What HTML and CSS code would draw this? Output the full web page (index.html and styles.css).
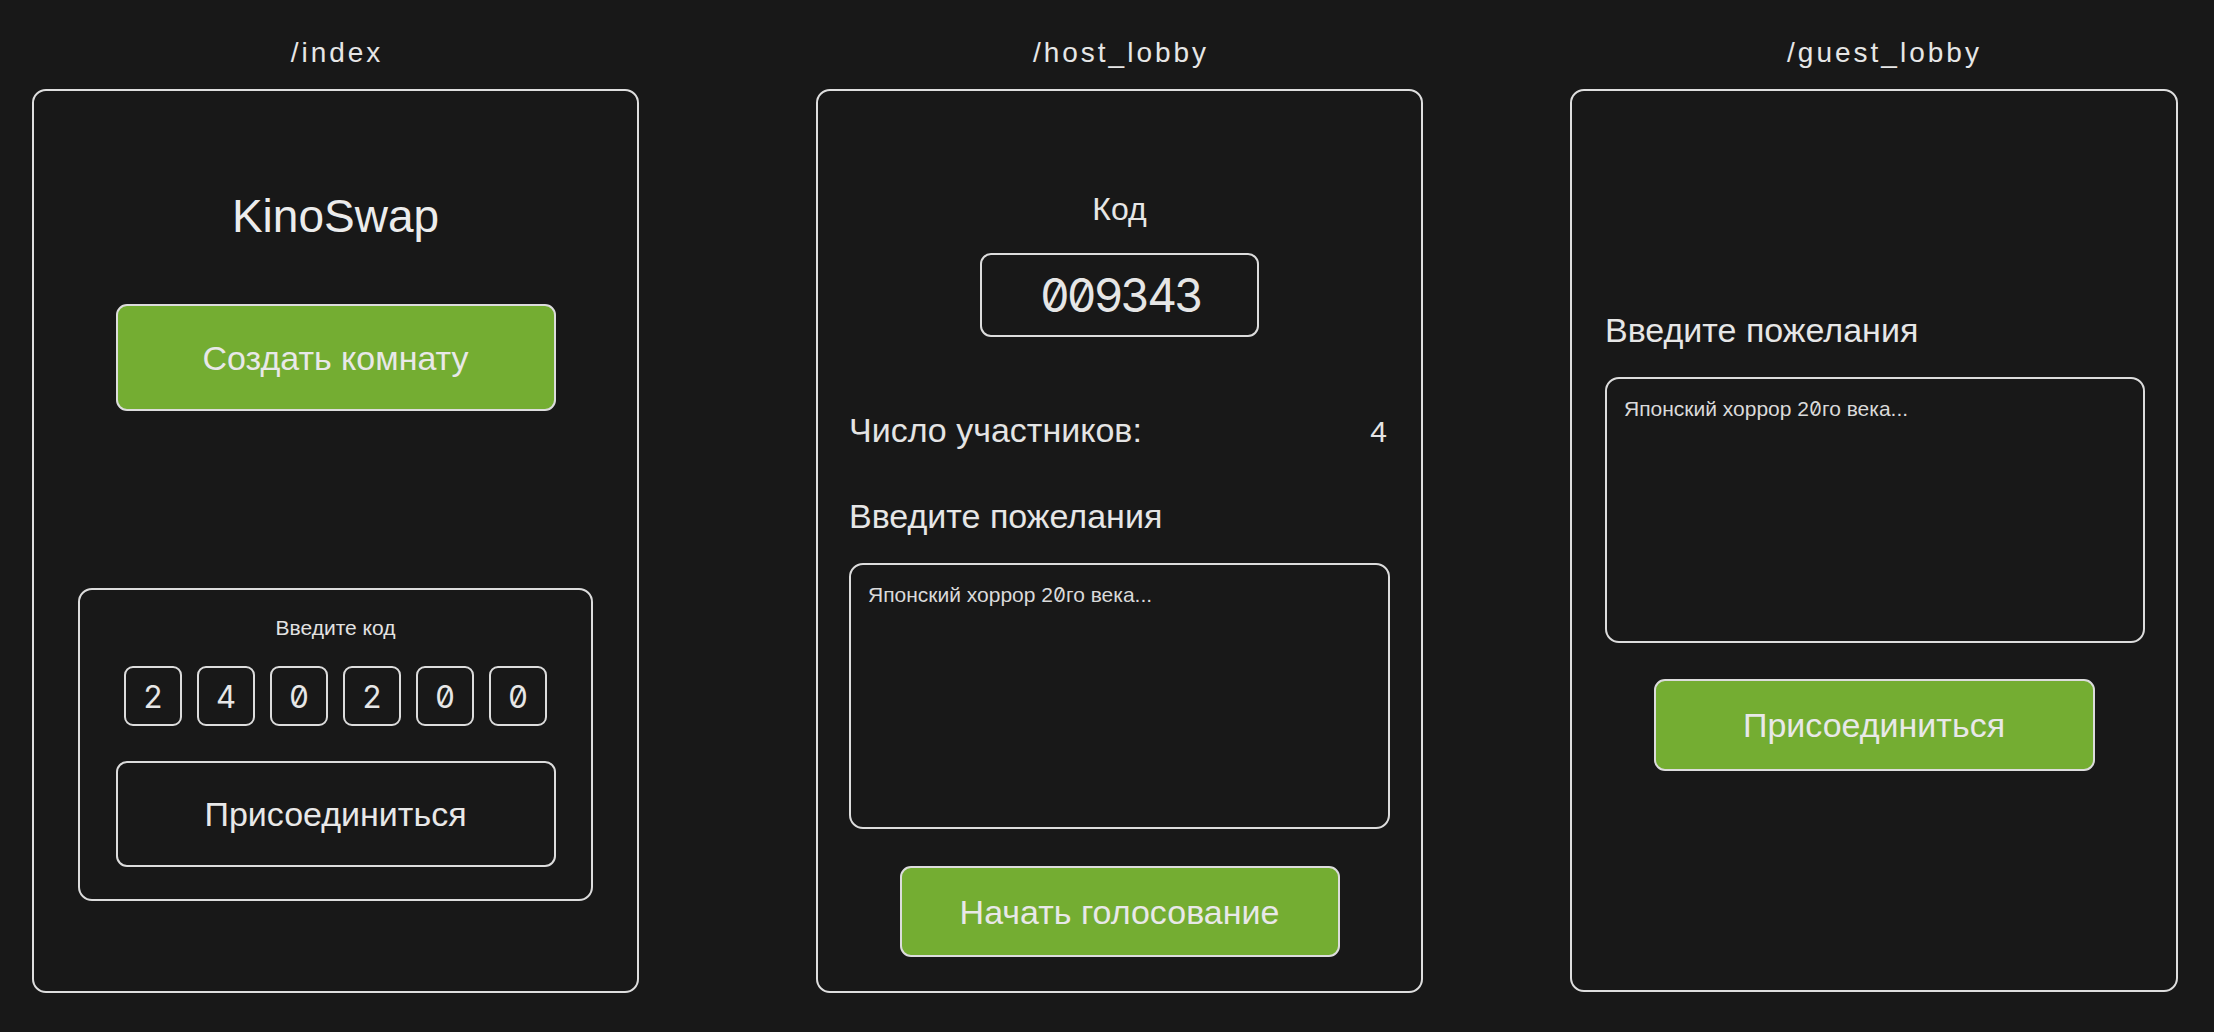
FILE: index.html
```html
<!DOCTYPE html>
<html lang="ru">
<head>
<meta charset="utf-8">
<title>KinoSwap — экраны</title>
<link rel="stylesheet" href="styles.css">
</head>
<body>
<main class="board">
  <section class="screen">
    <h2 class="route">/index</h2>
    <div class="frame frame--index">
      <h1 class="brand">KinoSwap</h1>
      <button class="btn btn--primary btn--create">Создать комнату</button>
      <div class="join-card">
        <p class="join-label">Введите код</p>
        <div class="code-inputs">
          <span class="digit">2</span>
          <span class="digit">4</span>
          <span class="digit">0</span>
          <span class="digit">2</span>
          <span class="digit">0</span>
          <span class="digit">0</span>
        </div>
        <button class="btn btn--outline btn--join">Присоединиться</button>
      </div>
    </div>
  </section>

  <section class="screen screen--host">
    <h2 class="route">/host_lobby</h2>
    <div class="frame frame--host">
      <p class="code-title">Код</p>
      <div class="code-display">009343</div>
      <div class="count-row">
        <span class="count-label">Число участников:</span>
        <span class="count-value">4</span>
      </div>
      <p class="wish-label wish-label--host">Введите пожелания</p>
      <div class="wish-box">Японский хоррор 2<span class="zero">0</span>го века...</div>
      <button class="btn btn--primary btn--start">Начать голосование</button>
    </div>
  </section>

  <section class="screen screen--guest">
    <h2 class="route route--guest">/guest_lobby</h2>
    <div class="frame frame--guest">
      <p class="wish-label">Введите пожелания</p>
      <div class="wish-box">Японский хоррор 2<span class="zero">0</span>го века...</div>
      <button class="btn btn--primary btn--guest-join">Присоединиться</button>
    </div>
  </section>
</main>
</body>
</html>
```

FILE: styles.css
```css
* {
  box-sizing: border-box;
}

html, body {
  margin: 0;
  padding: 0;
  background: #181818;
}

body {
  width: 2214px;
  height: 1032px;
  overflow: hidden;
  font-family: "Liberation Sans", Arial, sans-serif;
  color: #e4e4e4;
}

.board {
  display: flex;
  align-items: flex-start;
  padding: 39px 0 0 32px;
}

.screen {
  display: flex;
  flex-direction: column;
  align-items: center;
  width: 607px;
}

.screen--host {
  margin-left: 177px;
}

.screen--guest {
  margin-left: 147px;
  width: 608px;
}

.route {
  margin: 0;
  font-size: 28px;
  line-height: 1;
  font-weight: normal;
  letter-spacing: 3px;
  padding-left: 3px;
  color: #e6e6e6;
}

.route--guest {
  margin-left: 18px;
}

.frame {
  margin-top: 22px;
  width: 100%;
  height: 904px;
  border: 2px solid #dedede;
  border-radius: 14px;
  display: flex;
  flex-direction: column;
  align-items: center;
  padding: 0 31px;
}

.frame--index {
  padding-top: 102px;
}

.frame--host {
  padding-top: 102px;
}

.frame--guest {
  padding-top: 222px;
  height: 903px;
}

p {
  margin: 0;
}

.brand {
  margin: 0;
  font-size: 46px;
  line-height: 1;
  font-weight: normal;
  color: #ececec;
}

.btn {
  display: flex;
  align-items: center;
  justify-content: center;
  font-family: "Liberation Sans", Arial, sans-serif;
  font-size: 34px;
  line-height: 1;
  color: #e8e8e8;
  border: 2px solid #dcdcdc;
  border-radius: 11px;
  padding: 0;
  flex: none;
}

.btn--primary {
  background: #74ad32;
}

.btn--outline {
  background: transparent;
}

.btn--create {
  margin-top: 65px;
  width: 440px;
  height: 107px;
}

.join-card {
  margin-top: 177px;
  width: 515px;
  height: 313px;
  border: 2px solid #dcdcdc;
  border-radius: 14px;
  display: flex;
  flex-direction: column;
  align-items: center;
  padding-top: 27px;
}

.join-label {
  font-size: 21px;
  line-height: 1;
  color: #e2e2e2;
}

.code-inputs {
  margin-top: 28px;
  display: flex;
  gap: 15px;
}

.digit {
  width: 58px;
  height: 60px;
  border: 2px solid #dcdcdc;
  border-radius: 9px;
  display: flex;
  align-items: center;
  justify-content: center;
  font-family: Inter, "DejaVu Sans Mono", monospace;
  font-feature-settings: "zero" 1, "tnum" 1;
  font-size: 31px;
  color: #e6e6e6;
}

.btn--join {
  margin-top: 35px;
  width: 440px;
  height: 106px;
}

.code-title {
  font-size: 32px;
  line-height: 1;
  color: #e6e6e6;
}

.code-display {
  margin-top: 28px;
  width: 279px;
  height: 84px;
  border: 2px solid #dcdcdc;
  border-radius: 11px;
  display: flex;
  align-items: center;
  justify-content: center;
  font-family: Inter, "DejaVu Sans Mono", monospace;
  font-feature-settings: "zero" 1, "tnum" 1;
  font-size: 46px;
  letter-spacing: -3px;
  padding-left: 2px;
  color: #e6e6e6;
}

.count-row {
  align-self: stretch;
  margin-top: 76px;
  display: flex;
  justify-content: space-between;
  align-items: baseline;
  line-height: 1;
  padding-right: 3px;
}

.count-label {
  font-size: 34px;
}

.count-value {
  font-size: 30px;
}

.wish-label {
  align-self: stretch;
  font-size: 34px;
  line-height: 1;
  color: #e6e6e6;
  padding-left: 2px;
}

.wish-label--host {
  margin-top: 52px;
  padding-left: 0;
}

.wish-box {
  align-self: stretch;
  margin-top: 30px;
  height: 266px;
  border: 2px solid #dcdcdc;
  border-radius: 14px;
  padding: 19px 17px;
  font-size: 21px;
  line-height: 1;
  color: #dadada;
}

.frame--guest .wish-box {
  margin-left: 2px;
}

.zero {
  font-family: Inter, "DejaVu Sans Mono", monospace;
  font-feature-settings: "zero" 1, "tnum" 1;
  font-size: 20px;
}

.btn--start {
  margin-top: 37px;
  width: 440px;
  height: 91px;
}

.btn--guest-join {
  margin-top: 36px;
  width: 441px;
  height: 92px;
}
```
